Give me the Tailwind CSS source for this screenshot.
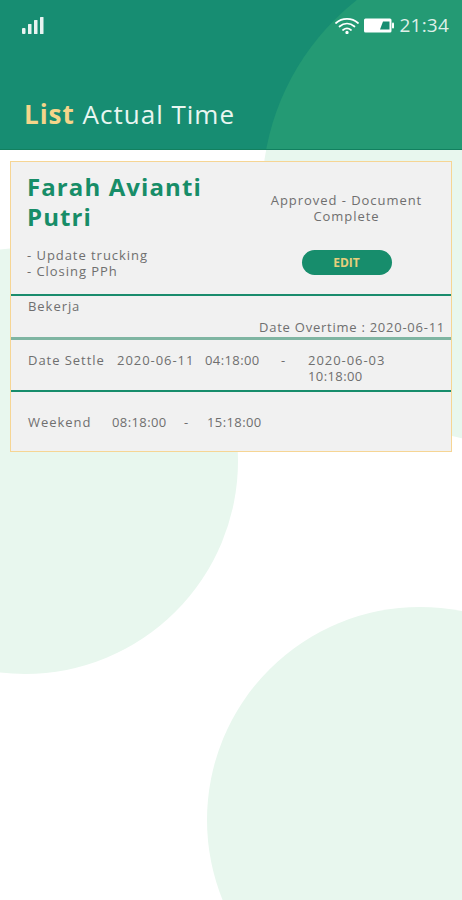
<!DOCTYPE html>
<html lang="en">
<head>
    <meta charset="utf-8" />
    <meta name="viewport" content="width=device-width, initial-scale=1.0" />
    <title>List Actual Time</title>
    <script src="https://cdn.jsdelivr.net/npm/@tailwindcss/browser@4"></script>
</head>
<body class="bg-white font-['Open_Sans',sans-serif]">
<div class="relative w-[462px] h-[900px] overflow-hidden">
    <!-- Background circles -->
    <div class="absolute left-[262px] top-[-53px] w-[496px] h-[496px] rounded-full bg-[#e8f7ee]"></div>
    <div class="absolute left-[-188px] top-[248px] w-[426px] h-[426px] rounded-full bg-[#e8f7ee]"></div>
    <div class="absolute left-[207px] top-[607px] w-[426px] h-[426px] rounded-full bg-[#e8f7ee]"></div>

    <!-- Header -->
    <header class="relative h-[150px] overflow-hidden bg-[#178d72] border-b border-[#12805f]">
        <div class="absolute left-[262px] top-[-53px] w-[496px] h-[496px] rounded-full bg-[#249a74]"></div>
        <div class="relative flex items-center justify-between h-[50px] pl-[22px] pr-[13px]">
            <svg width="22" height="17" viewBox="0 0 22 17" fill="#fff" class="opacity-90">
                <rect x="0" y="11" width="3.500" height="6" rx="1" />
                <rect x="6" y="7" width="3.500" height="10" rx="0.5" />
                <rect x="12" y="3" width="3.500" height="14" rx="0.5" />
                <rect x="18" y="0" width="3.500" height="17" rx="0.5" />
            </svg>
            <div class="flex items-center gap-[5px]">
                <svg width="24" height="17" viewBox="0 0 24 17" fill="none" stroke="#fff" stroke-width="1.700" stroke-linecap="round">
                    <path d="M1 6 C7 0.5 17 0.5 23 6" />
                    <path d="M4.5 9.5 C9 5.5 15 5.5 19.500 9.500" />
                    <path d="M8 13 C10.500 11 13.500 11 16 13" />
                    <circle cx="12" cy="15.500" r="0.8" fill="#fff" />
                </svg>
                <svg width="30" height="15" viewBox="0 0 30 15">
                    <rect x="0" y="0.500" width="27.500" height="14" rx="1.500" fill="#fff" />
                    <path d="M16 11.500 L19 3.500 H25.500 V11.500 Z" fill="#178d72" />
                    <rect x="28" y="4.500" width="2" height="6" rx="1" fill="#fff" />
                </svg>
                <span class="ml-[1px] text-[19px] leading-none text-[#dff0e9] tracking-[0.2px]">21:34</span>
            </div>
        </div>
        <h1 class="relative pl-6 mt-[48px] text-[26px] leading-[32px] tracking-[1px] text-[#e9f6f1]">
            <span class="font-bold text-[#f5d58a]">List</span> Actual Time
        </h1>
    </header>

    <!-- Card -->
    <main class="relative mx-[10px] mt-[11px] w-[442px] h-[291px] flex flex-col bg-[#f1f1f1] border border-[#f6d594] text-[13px] tracking-[0.95px] text-[#6f6f6f]">
        <section class="h-[134px] flex border-b-2 border-[#1a8c6d]">
            <div class="w-[231px] pl-4 pt-[10px]">
                <h2 class="text-[24px] leading-[30px] font-bold tracking-[1.100px] text-[#178d68]">Farah Avianti Putri</h2>
                <p class="mt-[15px] leading-[16px]">- Update trucking<br />- Closing PPh</p>
            </div>
            <div class="flex-1 flex flex-col items-center pt-[30px]">
                <p class="text-center leading-[16px]">Approved - Document<br />Complete</p>
                <button class="mt-[26px] w-[90px] h-[25px] rounded-full bg-[#178d6c] text-[12px] font-bold tracking-normal text-[#e8cf7c]">EDIT</button>
            </div>
        </section>
        <section class="h-[44px] flex flex-col justify-between pl-[17px] pr-[6px] pb-[1px] border-b-[3px] border-[#7fb5a2]">
            <p class="leading-[20px]">Bekerja</p>
            <p class="text-right leading-[18px] tracking-[0.75px]">Date Overtime : 2020-06-11</p>
        </section>
        <section class="h-[52px] flex pl-[17px] pt-[12px] border-b-2 border-[#178d6c] leading-[16px]">
            <span class="w-[89px]">Date Settle</span>
            <span class="w-[88px]">2020-06-11</span>
            <span class="w-[76px] tracking-[0.4px]">04:18:00</span>
            <span class="w-[27px]">-</span>
            <span class="w-[92px]">2020-06-03 <span class="tracking-[0.4px]">10:18:00</span></span>
        </section>
        <section class="flex-1 flex items-center pl-[17px] pt-[3px] tracking-[0.4px]">
            <span class="w-[84px] tracking-[0.95px]">Weekend</span>
            <span class="w-[72px]">08:18:00</span>
            <span class="w-[23px]">-</span>
            <span>15:18:00</span>
        </section>
    </main>
</div>
</body>
</html>
